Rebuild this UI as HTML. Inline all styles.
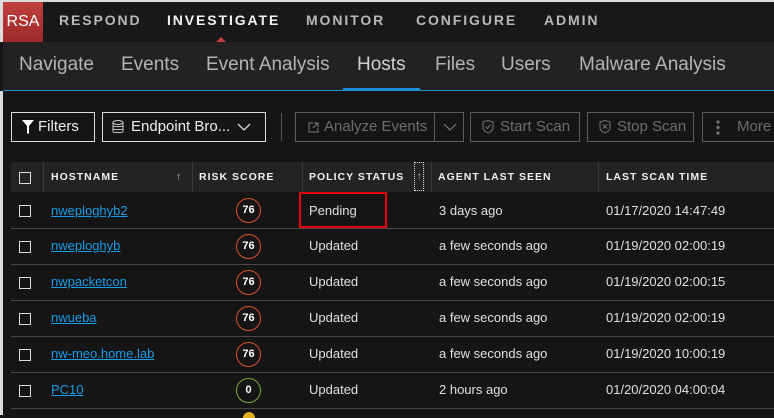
<!DOCTYPE html>
<html><head><style>
*{margin:0;padding:0;box-sizing:border-box}
body{width:774px;height:415px;overflow:hidden;background:#151515;font-family:"Liberation Sans",sans-serif;color:#e6e6e6;position:relative}
.a{position:absolute}
.top{left:0;top:0;width:774px;height:42px;background:#181818;border-top:2px solid #dcdcdc;border-left:3px solid #dcdcdc}
.logo{left:3px;top:2px;width:40px;height:40px;background:linear-gradient(#c0403e,#9c2a28);color:#fff;font-size:16px;line-height:40px;text-align:center;letter-spacing:0}
.tn{top:12px;font-size:14px;font-weight:bold;letter-spacing:1.9px;color:#b9b9b9}
.sub{left:3px;top:42px;width:771px;height:49px;background:#222;border-bottom:1px solid #1f8fd6}
.sn{top:54px;font-size:19px;color:#b4b4b4}
.btn{top:112px;height:30px;border:1px solid #ddd;font-size:15px;line-height:28px;padding-left:8px;color:#eee}
.db{border-color:#5c5c5c;color:#6d6d6d}
.hdr{left:11px;top:162px;width:763px;height:30px;background:#232323}
.hd{top:171px;font-size:10.5px;font-weight:bold;letter-spacing:1px;color:#f0f0f0}
.vl{top:162px;width:1px;height:30px;background:#3a3a3a}
.row{left:11px;width:763px;height:1px;background:#474747}
.cb{left:19px;width:12px;height:12px;border:1.5px solid #ddd}
.ln{left:51px;font-size:13px;color:#1a9be6;text-decoration:underline}
.c{font-size:13px;color:#e0e0e0}
.rs{left:236px;width:25px;height:25px;border:1.5px solid #d9532a;border-radius:50%;font-size:11px;font-weight:bold;text-align:center;line-height:22px;color:#fff}
</style></head><body>
<div class="a top"></div>
<div class="a logo">RSA</div>
<div class="a tn" style="left:59px">RESPOND</div>
<div class="a tn" style="left:167px;color:#f2f2f2">INVESTIGATE</div>
<div class="a" style="left:216px;top:37px;width:0;height:0;border-left:5px solid transparent;border-right:5px solid transparent;border-bottom:5px solid #c0403e"></div>
<div class="a tn" style="left:306px">MONITOR</div>
<div class="a tn" style="left:416px">CONFIGURE</div>
<div class="a tn" style="left:544px">ADMIN</div>
<div class="a sub"></div>
<div class="a sn" style="left:19px">Navigate</div>
<div class="a sn" style="left:121px">Events</div>
<div class="a sn" style="left:206px">Event Analysis</div>
<div class="a sn" style="left:357px;color:#d0d0d0">Hosts</div>
<div class="a sn" style="left:435px">Files</div>
<div class="a sn" style="left:501px">Users</div>
<div class="a sn" style="left:579px">Malware Analysis</div>
<div class="a" style="left:343px;top:88px;width:77px;height:3px;background:#1f8fd6"></div>
<div class="a" style="left:0;top:91px;width:3px;height:324px;background:#dcdcdc"></div>

<div class="a btn" style="left:11px;width:84px;padding-left:26px">Filters</div>
<svg class="a" style="left:22px;top:120px" width="12" height="14"><path d="M0 0H12L7 6V14L5 13V6Z" fill="#fff"/></svg>
<div class="a btn" style="left:102px;width:164px;padding-left:28px">Endpoint Bro...</div>
<svg class="a" style="left:112px;top:120px" width="12" height="14" fill="none" stroke="#ccc"><ellipse cx="6" cy="2.5" rx="5" ry="2"/><path d="M1 2.5V11.5C1 13 11 13 11 11.5V2.5M1 5.5C1 7 11 7 11 5.5M1 8.5C1 10 11 10 11 8.5"/></svg>
<svg class="a" style="left:237px;top:123px" width="14" height="9"><path d="M1 1L7 7L13 1" stroke="#ddd" fill="none" stroke-width="1.3"/></svg>
<div class="a" style="left:281px;top:113px;width:1px;height:28px;background:#555"></div>
<div class="a btn db" style="left:295px;width:169px;padding-left:28px">Analyze Events</div>
<div class="a" style="left:434px;top:112px;width:1px;height:30px;background:#5c5c5c"></div>
<svg class="a" style="left:308px;top:122px" width="11" height="11" fill="none" stroke="#777"><path d="M5 1H1V10H10V6M6 1H10V5M10 1L5 6"/></svg>
<svg class="a" style="left:443px;top:123px" width="14" height="9"><path d="M1 1L7 7L13 1" stroke="#777" fill="none" stroke-width="1.2"/></svg>
<div class="a btn db" style="left:470px;width:110px;padding-left:29px">Start Scan</div>
<svg class="a" style="left:482px;top:120px" width="12" height="14" fill="none" stroke="#777"><path d="M1 2L6 0.5L11 2V8C11 11 6 13 6 13C6 13 1 11 1 8Z"/><path d="M3.5 6.5L5.5 8.5L8.5 4.5"/></svg>
<div class="a btn db" style="left:587px;width:107px;padding-left:29px">Stop Scan</div>
<svg class="a" style="left:599px;top:120px" width="12" height="14" fill="none" stroke="#777"><path d="M1 2L6 0.5L11 2V8C11 11 6 13 6 13C6 13 1 11 1 8Z"/><path d="M4 4.5L8 8.5M8 4.5L4 8.5"/></svg>
<div class="a btn db" style="left:702px;width:80px;padding-left:34px">More</div>
<svg class="a" style="left:716px;top:120px" width="4" height="15" fill="#777"><circle cx="2" cy="2" r="1.6"/><circle cx="2" cy="7.5" r="1.6"/><circle cx="2" cy="13" r="1.6"/></svg>

<div class="a hdr"></div>
<div class="a cb" style="top:172px"></div>
<div class="a vl" style="left:43px"></div>
<div class="a hd" style="left:51px">HOSTNAME</div>
<div class="a hd" style="left:176px;font-weight:normal;color:#bbb">↑</div>
<div class="a vl" style="left:192px"></div>
<div class="a hd" style="left:199px">RISK SCORE</div>
<div class="a vl" style="left:302px"></div>
<div class="a hd" style="left:309px">POLICY STATUS</div>
<div class="a" style="left:414px;top:162px;width:10px;height:29px;border:1px dotted #ddd;font-size:10px;color:#bbb;text-align:center;line-height:27px">↑</div>
<div class="a vl" style="left:431px"></div>
<div class="a hd" style="left:438px">AGENT LAST SEEN</div>
<div class="a vl" style="left:598px"></div>
<div class="a hd" style="left:606px">LAST SCAN TIME</div>

<div class="a" style="left:299px;top:192px;width:88px;height:36px;border:2px solid #e8000e"></div>

<div class="a cb" style="top:205px"></div><div class="a ln" style="top:203px">nweploghyb2</div><div class="a rs" style="top:198px">76</div><div class="a c" style="left:309px;top:203px">Pending</div><div class="a c" style="left:439px;top:203px">3 days ago</div><div class="a c" style="left:606px;top:203px">01/17/2020 14:47:49</div>
<div class="a row" style="top:228px"></div>
<div class="a cb" style="top:241px"></div><div class="a ln" style="top:238px">nweploghyb</div><div class="a rs" style="top:234px">76</div><div class="a c" style="left:309px;top:238px">Updated</div><div class="a c" style="left:439px;top:238px">a few seconds ago</div><div class="a c" style="left:606px;top:238px">01/19/2020 02:00:19</div>
<div class="a row" style="top:264px"></div>
<div class="a cb" style="top:277px"></div><div class="a ln" style="top:274px">nwpacketcon</div><div class="a rs" style="top:270px">76</div><div class="a c" style="left:309px;top:274px">Updated</div><div class="a c" style="left:439px;top:274px">a few seconds ago</div><div class="a c" style="left:606px;top:274px">01/19/2020 02:00:15</div>
<div class="a row" style="top:300px"></div>
<div class="a cb" style="top:313px"></div><div class="a ln" style="top:310px">nwueba</div><div class="a rs" style="top:306px">76</div><div class="a c" style="left:309px;top:310px">Updated</div><div class="a c" style="left:439px;top:310px">a few seconds ago</div><div class="a c" style="left:606px;top:310px">01/19/2020 02:00:19</div>
<div class="a row" style="top:336px"></div>
<div class="a cb" style="top:349px"></div><div class="a ln" style="top:346px">nw-meo.home.lab</div><div class="a rs" style="top:342px">76</div><div class="a c" style="left:309px;top:346px">Updated</div><div class="a c" style="left:439px;top:346px">a few seconds ago</div><div class="a c" style="left:606px;top:346px">01/19/2020 10:00:19</div>
<div class="a row" style="top:372px"></div>
<div class="a cb" style="top:385px"></div><div class="a ln" style="top:382px">PC10</div><div class="a rs" style="top:378px;border-color:#7fa83a">0</div><div class="a c" style="left:309px;top:382px">Updated</div><div class="a c" style="left:439px;top:382px">2 hours ago</div><div class="a c" style="left:606px;top:382px">01/20/2020 04:00:04</div>
<div class="a row" style="top:408px"></div>
<div class="a" style="left:243px;top:412px;width:12px;height:6px;border-radius:6px 6px 0 0;background:#e0b020"></div>
</body></html>
